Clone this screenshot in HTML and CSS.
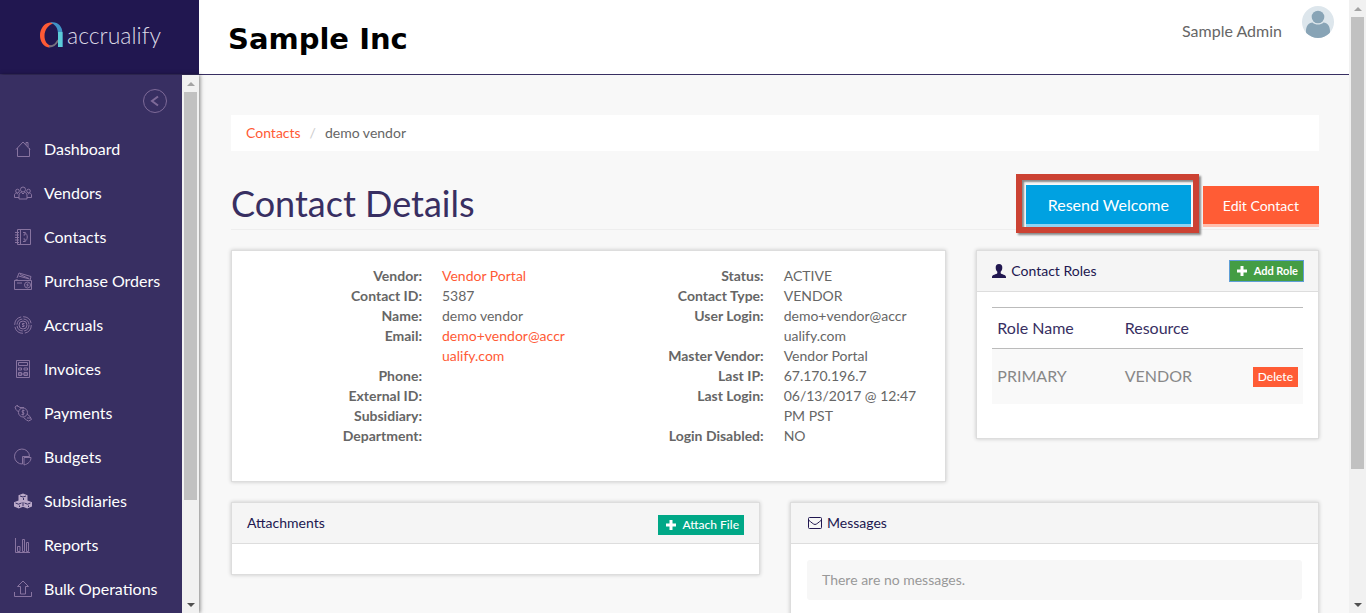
FILE: index.html
```html
<!DOCTYPE html>
<html lang="en">
<head>
<meta charset="utf-8">
<meta name="viewport" content="width=device-width, initial-scale=1">
<title>Contact Details</title>
<link rel="stylesheet" href="styles.css">
</head>
<body>
<div class="app">
  <header class="topbar">
    <a class="brand" href="#">
      <svg class="brand-mark" viewBox="0 0 23 26" width="23" height="26" fill="none">
        <path d="M10 0.5C4 1 0 7 0 13.500c0 6 3.500 11.500 9 12l2-2C7 23 4.500 19 4.500 14 4.500 8 8 3 14 1z" fill="#ff5a35"/>
        <path d="M9 25.500c4 .2 7-2 9.500-6l-1-2c-2 4-4.500 6.200-8.500 6z" fill="#77717f"/>
        <path d="M10 .5c7-1.500 12.500 3 12.500 11V25H18V12C18 6 15.500 2.500 10 .5z" fill="#3f93c6"/>
        <path d="M18 10l4.500 0V25H18z" fill="#5ccbd8"/>
      </svg>
      <span class="brand-name">accrualify</span>
    </a>
    <div class="company">Sample Inc</div>
    <div class="user">
      <span class="user-name">Sample Admin</span>
      <svg class="avatar" viewBox="0 0 32 32" width="32" height="32" role="img" aria-label="Profile">
        <defs><clipPath id="disc"><circle cx="16" cy="16" r="16"/></clipPath></defs>
        <circle cx="16" cy="16" r="16" fill="#dde6ec"/>
        <g clip-path="url(#disc)" fill="#88a4b6"><circle cx="16" cy="11" r="6.300"/><path d="M4 32v-7c0-5 2.500-8 6.500-8.500 3 2.700 8 2.700 11 0 4 .5 6.500 3.500 6.500 8.500v7z"/></g>
      </svg>
    </div>
  </header>

  <aside class="sidebar">
    <nav class="menu" aria-label="Main">
      <button class="collapse" type="button" aria-label="Collapse menu">
        <svg viewBox="0 0 24 24" width="24" height="24" fill="none" stroke="#7e6a98"><circle cx="12" cy="12" r="11.500"/><path d="M15 7.500l-6 4.500 6 4.500" stroke-width="2"/></svg>
      </button>
      <a class="item" href="#"><svg class="ico" viewBox="0 0 18 18"><path d="M2 9.500 9 2l7 7.500M3.500 8v8.500h12V8M12 5V2.500h2V7"/></svg>Dashboard</a>
      <a class="item" href="#"><svg class="ico" viewBox="0 0 18 18"><circle cx="9" cy="5.500" r="2.500"/><circle cx="3.500" cy="7" r="1.800"/><circle cx="14.500" cy="7" r="1.800"/><path d="M5 15v-4c0-1.500 1-2.500 2.500-2.500L9 10l1.500-1.500C12 8.500 13 9.500 13 11v4zM5 13.500H.5V11c0-1 .8-2 2-2l1.500 1M13 13.500h4.500V11c0-1-.8-2-2-2L14 10"/></svg>Vendors</a>
      <a class="item" href="#"><svg class="ico" viewBox="0 0 18 18"><path d="M3.500 1.500h13v15h-13zM6.500 1.500v15M1 4.500h4M1 7h4M1 9.500h4M1 12h4M1 14.500h4M9 4.500h2v2.500h-1.500M9 13.500h2V11H9.500M11 4.500c3 2 3 7 0 9"/></svg>Contacts</a>
      <a class="item" href="#"><svg class="ico" viewBox="0 0 18 18"><path d="M.5 8.500h17v9H.5zM.5 8.500l3-1M3 6l2-5 12 3.500-1 4M4.500 4l11 3M6 2.500l9 4M3 11h5"/><circle cx="13.500" cy="13" r="3"/><path d="M14.500 12h-1.500v1h1v1h-1.500"/></svg>Purchase Orders</a>
      <a class="item" href="#"><svg class="ico" viewBox="0 0 18 18"><circle cx="9" cy="9" r="8.300" stroke-dasharray="11 2"/><circle cx="9" cy="9" r="6" stroke-dasharray="8 1.400"/><circle cx="9" cy="9" r="4"/><path d="M10.500 7.500H8.500v1.500h1.500v1.500H8"/></svg>Accruals</a>
      <a class="item" href="#"><svg class="ico" viewBox="0 0 18 18"><path d="M2.500.5h13v17h-13zM4.500 2.500h9v3h-9zM4.500 8h3v2h-3zM10 8h3.500v2H10zM4.500 12.500h3v3h-3zM10 12.500h3.500v3H10zM4.500 14h9"/></svg>Invoices</a>
      <a class="item" href="#"><svg class="ico" viewBox="0 0 18 18"><circle cx="9" cy="8.500" r="4.500"/><path d="M10.500 6.500H8.500L8 8l2 1-.5 1.500H7.500M9 5.500v6M4.500 8 2 5.500 1 3l2-1.500 3 2h4M3 1l1.500 2M13 10l3 2.500 1.500 3-3 1.500-2-1-3-2.500M13 14h3.500"/></svg>Payments</a>
      <a class="item" href="#"><svg class="ico" viewBox="0 0 18 18"><path d="M8.500 16A7.500 7.500 0 1 1 15.500 8.500h-7zM10 9.500h7c0 4-3 6.500-7 7.500z"/></svg>Budgets</a>
      <a class="item" href="#"><svg class="ico" viewBox="0 0 18 18"><path d="M9 1.500l4.500 1.700v5.300l4.500 1.800v4.200l-4.700 2L9 14.800l-4.300 1.700L0 14.500v-4.200l4.500-1.800V3.200z" fill="#bba9c9" stroke="none"/><path d="M6 4l3 1 3-1M9.500 8V6M1.500 11l3 1.200L7.500 11M10.500 11l3 1.200 3-1.200M9 10.200V14M5.500 15v-1.500M14.500 15v-1.500" stroke="#382f62"/></svg>Subsidiaries</a>
      <a class="item" href="#"><svg class="ico" viewBox="0 0 18 18"><path d="M1.500 2v14.500H16M3.500 10.500h2.500v5H3.500zM8.500 3.500h2v12h-2zM12.500 6.500h2v9h-2z"/></svg>Reports</a>
      <a class="item" href="#"><svg class="ico" viewBox="0 0 18 18"><path d="M6.500 14V6.500H3.500L9 1l5.500 5.500h-3V14zM.5 12v4.500h17V12"/></svg>Bulk Operations</a>
    </nav>
    <div class="scroll" aria-hidden="true">
      <i class="arrow up"></i><div class="track"><div class="thumb thumb-side"></div></div><i class="arrow down"></i>
    </div>
  </aside>

  <main class="content">
    <nav class="crumbs" aria-label="Breadcrumb"><a href="#">Contacts</a><span class="slash">/</span><span>demo vendor</span></nav>

    <div class="title-row">
      <h1>Contact Details</h1>
      <div class="actions">
        <div class="highlight"><button class="btn btn-blue" type="button">Resend Welcome</button></div>
        <button class="btn btn-orange" type="button">Edit Contact</button>
      </div>
    </div>

    <div class="grid">
      <section class="panel details">
        <dl>
          <dt>Vendor:</dt><dd><a href="#">Vendor Portal</a></dd>
          <dt>Contact ID:</dt><dd>5387</dd>
          <dt>Name:</dt><dd>demo vendor</dd>
          <dt>Email:</dt><dd><a href="#">demo+vendor@accr<wbr>ualify.com</a></dd>
          <dt>Phone:</dt><dd></dd>
          <dt>External ID:</dt><dd></dd>
          <dt>Subsidiary:</dt><dd></dd>
          <dt>Department:</dt><dd></dd>
        </dl>
        <dl>
          <dt>Status:</dt><dd>ACTIVE</dd>
          <dt>Contact Type:</dt><dd>VENDOR</dd>
          <dt>User Login:</dt><dd>demo+vendor@accr<wbr>ualify.com</dd>
          <dt>Master Vendor:</dt><dd>Vendor Portal</dd>
          <dt>Last IP:</dt><dd>67.170.196.7</dd>
          <dt>Last Login:</dt><dd>06/13/2017 @ 12:47 PM PST</dd>
          <dt>Login Disabled:</dt><dd>NO</dd>
        </dl>
      </section>

      <section class="panel roles">
        <div class="panel-head">
          <h2><svg viewBox="0 0 14 14" width="14" height="14"><path d="M7 0c2.300 0 3.500 1.600 3.300 4-.1 1.800-.8 3-1.600 3.800v1.400C9.500 10.500 14 10.500 14 13v1H0v-1c0-2.500 4.500-2.500 5.300-3.800V7.800C4.500 7 3.800 5.800 3.700 4 3.500 1.600 4.700 0 7 0z" fill="#211750"/></svg>Contact Roles</h2>
          <button class="mini mini-add" type="button"><svg viewBox="0 0 10 10" width="10" height="10"><path d="M3.500 0h3v3.500H10v3H6.500V10h-3V6.500H0v-3h3.500z" fill="#fff"/></svg>Add Role</button>
        </div>
        <div class="panel-body roles-body">
          <table>
            <thead><tr><th scope="col">Role Name</th><th scope="col">Resource</th><td></td></tr></thead>
            <tbody><tr><td>PRIMARY</td><td>VENDOR</td><td class="right"><button class="mini mini-delete" type="button">Delete</button></td></tr></tbody>
          </table>
        </div>
      </section>

      <section class="panel half">
        <div class="panel-head">
          <h2>Attachments</h2>
          <button class="mini mini-attach" type="button"><svg viewBox="0 0 10 10" width="10" height="10"><path d="M3.500 0h3v3.500H10v3H6.500V10h-3V6.500H0v-3h3.500z" fill="#fff"/></svg>Attach File</button>
        </div>
        <div class="panel-body"></div>
      </section>

      <section class="panel half">
        <div class="panel-head messages-head">
          <h2><svg viewBox="0 0 14 12" width="14" height="12" fill="none" stroke="#211750"><rect x=".5" y=".5" width="13" height="11" rx="1"/><path d="M.5 3C3 5 5.500 7.500 7 7.500S11 5 13.500 3"/></svg>Messages</h2>
        </div>
        <div class="panel-body messages-body"><p class="well">There are no messages.</p></div>
      </section>
    </div>
  </main>
</div>
<div class="scroll" aria-hidden="true">
  <i class="arrow up"></i><div class="track"><div class="thumb thumb-page"></div></div><i class="arrow down"></i>
</div>
</body>
</html>
```

FILE: styles.css
```css
* { box-sizing: border-box; }
body {
  margin: 0;
  height: 100vh;
  display: flex;
  overflow: hidden;
  background: #f8f8f8;
  color: #666;
  font: 14px/20px Lato, "Liberation Sans", sans-serif;
}
h1, h2, p, dl, dd { margin: 0; font-weight: 400; }
a { color: #ff5a35; text-decoration: none; }
button { font-family: inherit; border: 0; color: #fff; cursor: pointer; }
svg { flex: none; }

.app {
  flex: 1;
  min-width: 0;
  display: grid;
  grid-template-columns: 199px minmax(0, 1fr);
  grid-template-rows: 75px minmax(0, 1fr);
}

/* Top bar */
.topbar {
  grid-column: 1 / -1;
  display: flex;
  background: #fff;
  border-bottom: 1px solid #382f62;
}
.brand {
  width: 199px;
  display: flex;
  align-items: center;
  gap: 4px;
  padding: 0 0 5px 40px;
  background: #211750;
  color: #dcd9e6;
}
.brand-name { font-size: 23px; font-weight: 300; line-height: 26px; }
.company {
  flex: 1;
  align-self: center;
  padding: 4px 0 0 29px;
  color: #000;
  font: 700 29px/40px "DejaVu Sans", sans-serif;
}
.user { display: flex; gap: 20px; padding: 6px 15px 0 0; }
.user-name { font-size: 16px; line-height: 50px; }

/* Sidebar */
.sidebar {
  position: relative;
  display: flex;
  background: #382f62;
  box-shadow: 1px 0 4px rgba(0, 0, 0, .5);
}
.menu { flex: 1; display: flex; flex-direction: column; overflow: hidden; }
.collapse {
  flex: none;
  align-self: flex-end;
  height: 24px;
  margin: 14px 15px;
  padding: 0;
  background: none;
}
.item {
  flex: none;
  display: flex;
  align-items: center;
  gap: 12px;
  height: 44px;
  padding-left: 14px;
  color: #fff;
  font-size: 16px;
  white-space: nowrap;
}
.ico { width: 18px; height: 18px; fill: none; stroke: #8874a0; }

/* Scroll bars */
.scroll {
  flex: none;
  width: 17px;
  display: flex;
  flex-direction: column;
  align-items: center;
  background: #f1f1f1;
}
.track { flex: 1; width: 13px; }
.thumb { background: #c1c1c1; }
.thumb-side { height: 81%; }
.thumb-page { height: 78%; }
.arrow { height: 17px; display: flex; align-items: center; }
.arrow::before { content: ""; border: 4px solid transparent; }
.up::before { border-top-width: 0; border-bottom-color: #a3a3a3; }
.down::before { border-bottom-width: 0; border-top-color: #505050; }

/* Content */
.content { padding: 40px 30px 0 32px; overflow: hidden; }
.crumbs { display: flex; padding: 8px 15px; background: #fff; }
.slash { padding: 0 9px; color: #ccc; }
.title-row {
  display: flex;
  justify-content: space-between;
  align-items: flex-end;
  margin-top: 34px;
  border-bottom: 1px solid #eee;
}
h1 { padding-bottom: 8px; color: #382f62; font-size: 36px; line-height: 36px; }
.actions { display: flex; align-items: flex-end; gap: 12px; padding-bottom: 2px; }
.btn { padding: 1px 20px 0; font-size: 14px; line-height: 37px; white-space: nowrap; }
.btn-orange { background: #ff5c35; border-bottom: 3px solid #ffbfae; }
.btn-blue {
  display: block;
  padding: 1px 22px 0;
  font-size: 16px;
  line-height: 38px;
  background: #00a1e1;
  border-bottom: 3px solid #8fd3f2;
}
.highlight { position: relative; }
.highlight::after {
  content: "";
  position: absolute;
  inset: -11px -8px -6px -10px;
  border: 6px solid #cc4233;
  box-shadow: 2px 2px 2px #888, inset 2px 2px 2px #888;
  pointer-events: none;
}

.grid {
  display: grid;
  grid-template-columns: repeat(12, minmax(0, 1fr));
  align-items: start;
  gap: 20px 30px;
  margin-top: 20px;
}
.panel {
  background: #fff;
  border: 1px solid #ddd;
  box-shadow: 0 0 4px rgba(0, 0, 0, .2);
}
.details { grid-column: span 8; display: flex; padding: 15px 15px 35px; }
.roles { grid-column: span 4; }
.half { grid-column: span 6; }

.details dl {
  flex: 1;
  display: grid;
  grid-template-columns: 160px minmax(0, 1fr);
  column-gap: 20px;
  align-content: start;
  padding-left: 15px;
}
dt { text-align: right; font-weight: 700; }

.panel-head {
  display: flex;
  justify-content: space-between;
  align-items: center;
  height: 41px;
  padding: 0 15px;
  background: #f5f5f5;
  border-bottom: 1px solid #ddd;
}
.panel-head h2 {
  display: flex;
  align-items: center;
  gap: 5px;
  color: #211750;
  font-size: 14px;
  line-height: 20px;
}
.panel-body { padding: 15px; }
.roles-body { padding-bottom: 34px; }
.messages-head { padding-left: 17px; }
.messages-body { padding: 16px; }

.mini {
  display: inline-flex;
  align-items: center;
  gap: 7px;
  height: 20px;
  padding: 0 5px;
  font-size: 12px;
  font-weight: 500;
  line-height: 18px;
}
.mini-add { padding: 0 5px 0 7px; background: #449d44; outline: 1px solid #5e9ed6; font-size: 11px; font-weight: 700; }
.mini-attach { align-self: flex-end; margin-bottom: 8px; padding: 0 5px 0 8px; background: #00a887; }
.mini-delete { background: #ff5c35; }

table {
  width: 100%;
  border-collapse: collapse;
  table-layout: fixed;
  border-top: 1px solid #bbb;
  font-size: 16px;
}
th { color: #382f62; font-weight: 400; text-align: left; }
th, td { padding: 10px 5px; width: 41%; }
th:last-child, td:last-child { width: 18%; }
thead tr { border-bottom: 1px solid #bbb; }
tbody tr { height: 55px; background: #f9f9f9; color: #888; }
.right { padding-left: 0; text-align: right; }
.right .mini { vertical-align: middle; }

.well { padding: 10px 15px; background: #f7f7f7; border-radius: 3px; color: #999; }
```
